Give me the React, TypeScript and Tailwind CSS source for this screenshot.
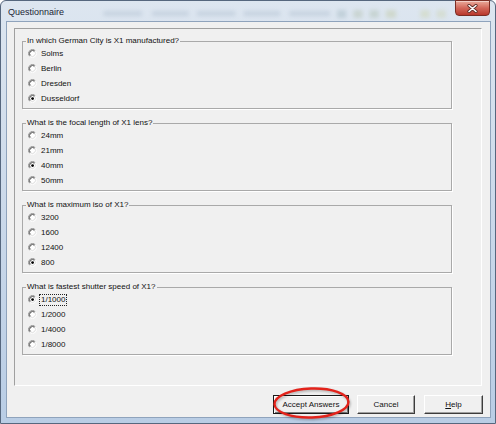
import React from "react";

type Question = {
  label: string;
  options: string[];
  selected: number;
  focused?: boolean;
};

const questions: Question[] = [
  {
    label: "In which German City is X1 manufactured?",
    options: ["Solms", "Berlin", "Dresden", "Dusseldorf"],
    selected: 3,
  },
  {
    label: "What is the focal length of X1 lens?",
    options: ["24mm", "21mm", "40mm", "50mm"],
    selected: 2,
  },
  {
    label: "What is maximum iso of X1?",
    options: ["3200", "1600", "12400", "800"],
    selected: 3,
  },
  {
    label: "What is fastest shutter speed of X1?",
    options: ["1/1000", "1/2000", "1/4000", "1/8000"],
    selected: 0,
    focused: true,
  },
];

// Classic 3D radio button: dark top-left arcs, light bottom-right arcs.
function Radio({ checked }: { checked: boolean }) {
  return (
    <svg width="9" height="9" viewBox="0 0 9 9" className="shrink-0">
      <circle cx="4.5" cy="4.5" r="3.2" fill="#ffffff" />
      <path d="M7.33 1.67 A4 4 0 0 0 1.67 7.33" fill="none" stroke="#8c8c8c" strokeWidth="1" />
      <path d="M1.67 7.33 A4 4 0 0 0 7.33 1.67" fill="none" stroke="#ffffff" strokeWidth="1" />
      <path d="M6.62 2.38 A3 3 0 0 0 2.38 6.62" fill="none" stroke="#4a4a4a" strokeWidth="1" />
      <path d="M2.38 6.62 A3 3 0 0 0 6.62 2.38" fill="none" stroke="#dedede" strokeWidth="1" />
      {checked && <circle cx="4.6" cy="4.6" r="1.4" fill="#000000" />}
    </svg>
  );
}

function Group({ q }: { q: Question }) {
  return (
    <fieldset className="w-[430px] border border-[#a9a9a9] pb-[2px] shadow-[1px_1px_0_#ffffff]">
      <legend className="ml-[3px] px-[1px] text-[8px] leading-[10px] text-[#111]">{q.label}</legend>
      {q.options.map((opt, i) => (
        <div key={opt} className="h-[15px] flex items-center pl-[5px] gap-[4px]">
          <Radio checked={i === q.selected} />
          {q.focused && i === q.selected ? (
            <span className="-ml-[2px] px-[1px] border border-dotted border-[#222] text-[8px] leading-[10px] text-[#111]">
              {opt}
            </span>
          ) : (
            <span className="text-[8px] leading-[10px] text-[#111]">{opt}</span>
          )}
        </div>
      ))}
    </fieldset>
  );
}

function CloseButton() {
  return (
    <div className="-mt-[1px] mr-[5px] w-[35px] h-[16px] rounded-b-[4px] border border-[#7a2d24] bg-gradient-to-b from-[#e9ab9c] via-[#d2675a] to-[#b8372b] flex items-center justify-center shadow-[inset_0_1px_0_rgba(255,255,255,0.45)]">
      <svg width="11" height="9" viewBox="0 0 11 9">
        <path d="M2 1.5 L9 7.5 M9 1.5 L2 7.5" stroke="#5b2a24" strokeWidth="3.2" strokeLinecap="round" />
        <path d="M2 1.5 L9 7.5 M9 1.5 L2 7.5" stroke="#ffffff" strokeWidth="1.6" strokeLinecap="round" />
      </svg>
    </div>
  );
}

function DialogButton({
  children,
  width,
  isDefault,
  className,
}: {
  children: React.ReactNode;
  width: string;
  isDefault?: boolean;
  className?: string;
}) {
  const frame = isDefault
    ? "border border-[#1a1a1a] shadow-[inset_1px_1px_0_#ffffff,inset_-1px_-1px_0_#7a7a7a]"
    : "border border-t-[#ffffff] border-l-[#ffffff] border-b-[#3c3c3c] border-r-[#3c3c3c] shadow-[inset_-1px_-1px_0_#a0a0a0]";
  return (
    <div
      className={`${width} h-[19px] bg-[#f0f0f0] ${frame} flex items-center justify-center text-[8px] leading-[10px] text-[#111] ${className ?? ""}`}
    >
      {children}
    </div>
  );
}

export default function App() {
  return (
    <div className="relative w-[496px] h-[424px] flex flex-col rounded-t-[6px] border border-[#56677e] bg-gradient-to-b from-[#dde6f0] via-[#cbd9ea] to-[#b9cde5] font-['Liberation_Sans',Arial,sans-serif]">
      {/* Title bar */}
      <div className="h-[20px] flex items-start">
        <span className="pl-[7px] pt-[5px] text-[9px] leading-[12px] text-[#1b2636] w-[80px] shrink-0">
          Questionnaire
        </span>
        <svg className="flex-1 h-[20px]" viewBox="0 0 368 20" preserveAspectRatio="none">
          <defs>
            <filter id="glass" x="-20%" y="-100%" width="140%" height="300%">
              <feGaussianBlur stdDeviation="2.2" />
            </filter>
          </defs>
          <g filter="url(#glass)" opacity="0.35">
            <rect x="22" y="10" width="38" height="5" fill="#9fb0c3" />
            <rect x="70" y="10" width="36" height="5" fill="#9fb0c3" />
            <rect x="114" y="10" width="38" height="5" fill="#9fb0c3" />
            <rect x="160" y="10" width="36" height="5" fill="#9fb0c3" />
            <rect x="205" y="10" width="40" height="5" fill="#9fb0c3" />
            <rect x="252" y="9" width="9" height="8" fill="#8fa8b0" />
            <rect x="268" y="9" width="9" height="8" fill="#a6b59a" />
            <rect x="284" y="9" width="9" height="8" fill="#9fb39b" />
            <rect x="300" y="9" width="10" height="8" fill="#b8c08c" />
            <rect x="334" y="9" width="9" height="8" fill="#c8cf96" />
            <rect x="350" y="9" width="9" height="8" fill="#c9cf9e" />
          </g>
        </svg>
        <CloseButton />
      </div>

      {/* Client area */}
      <div className="flex-1 ml-[5px] mr-[4px] mb-[5px] bg-[#f0f0f0] border border-[#8fa3bc] flex flex-col">
        <div className="mt-[6px] ml-[7px] w-[468px] h-[358px] border border-t-[#a0a0a0] border-l-[#a0a0a0] border-b-[#ffffff] border-r-[#ffffff] pt-[7px] pl-[7px] flex flex-col gap-[9px]">
          {questions.map((q) => (
            <Group key={q.label} q={q} />
          ))}
        </div>

        <div className="mt-[9px] pr-[7px] flex justify-end">
          <DialogButton width="w-[76px]" isDefault>
            Accept Answers
          </DialogButton>
          <DialogButton width="w-[58px]" className="ml-[8px]">
            Cancel
          </DialogButton>
          <DialogButton width="w-[59px]" className="ml-[9px]">
            <span>
              <span className="underline">H</span>elp
            </span>
          </DialogButton>
        </div>
      </div>

      {/* Red highlight ring drawn over the default button */}
      <svg
        className="absolute left-[268px] top-[382px] pointer-events-none"
        width="86"
        height="40"
        viewBox="0 0 86 40"
      >
        <defs>
          <filter id="ringShadow" x="-10%" y="-20%" width="120%" height="140%">
            <feGaussianBlur stdDeviation="0.8" />
          </filter>
        </defs>
        <ellipse
          cx="43.5"
          cy="21.5"
          rx="37"
          ry="14.5"
          fill="none"
          stroke="rgba(0,0,0,0.28)"
          strokeWidth="2.4"
          filter="url(#ringShadow)"
          transform="rotate(-2 43 20)"
        />
        <ellipse
          cx="42.5"
          cy="20"
          rx="37"
          ry="14.5"
          fill="none"
          stroke="#e3231b"
          strokeWidth="2.4"
          transform="rotate(-2 43 20)"
        />
      </svg>
    </div>
  );
}
